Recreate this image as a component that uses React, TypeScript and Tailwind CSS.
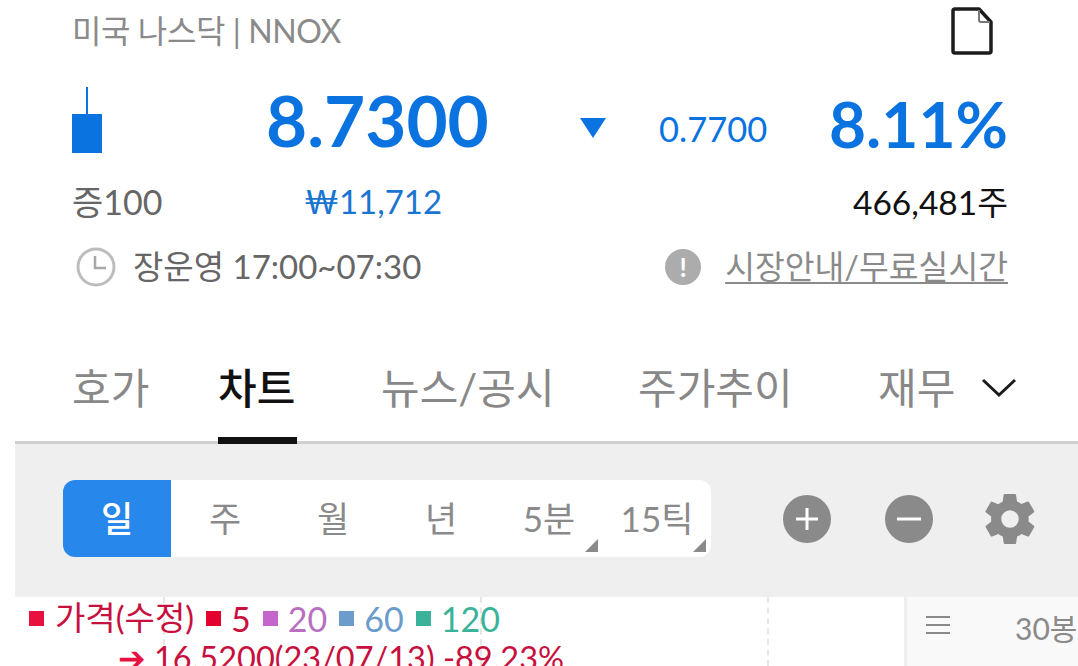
const font = "font-['Lato','Noto_Sans_CJK_KR',sans-serif]";

const periods = [
  { label: "주" },
  { label: "월" },
  { label: "년" },
  { label: "5분", menu: true },
  { label: "15틱", menu: true },
];

const legend = [
  { label: "5", box: "bg-[#e4002f]", text: "text-[#c8103e]" },
  { label: "20", box: "bg-[#c566cc]", text: "text-[#b96fc0]" },
  { label: "60", box: "bg-[#6c9ccc]", text: "text-[#6c9ccc]" },
  { label: "120", box: "bg-[#3bb39a]", text: "text-[#3bb39a]" },
];

export default function App() {
  return (
    <div className={`${font} h-[666px] w-[1078px] overflow-hidden bg-white`}>
      {/* Header */}
      <div className="pl-[72px] pr-[70px]">
        <div className="flex h-[62px] items-center justify-between">
          <span className="text-[32px] tracking-[-0.4px] text-[#8a8a8a]">미국 나스닥 | NNOX</span>
          <svg width="44" height="50" viewBox="0 0 44 50" className="mr-[14px]" fill="none">
            <path d="M3 5a2 2 0 0 1 2-2h24l12 13v29a2 2 0 0 1-2 2H5a2 2 0 0 1-2-2z" stroke="#1c1c1c" strokeWidth="3.5" strokeLinejoin="round" />
            <path d="M29 4v10a2 2 0 0 0 2 2h9" stroke="#777777" strokeWidth="2" />
          </svg>
        </div>

        <div className="flex h-[120px] items-center">
          <div className="mt-[-4px] flex w-[30px] flex-col items-center">
            <div className="h-[27px] w-[2px] bg-[#0a73e0]" />
            <div className="h-[39px] w-[30px] bg-[#0a73e0]" />
          </div>
          <span className="mt-[-6px] ml-[164px] w-[314px] text-[71px] leading-none font-bold text-[#0a73e0]">8.7300</span>
          <svg width="26" height="20" viewBox="0 0 26 20" className="mt-[12px]">
            <path d="M0 0h26L13 20z" fill="#0a73e0" />
          </svg>
          <span className="mt-[14px] ml-[53px] text-[34.5px] text-[#0a73e0]">0.7700</span>
          <span className="mt-[4px] ml-auto text-[64px] leading-none font-bold text-[#0a73e0]">8.11%</span>
        </div>

        <div className="flex h-[40px] items-center">
          <span className="mt-[-2px] w-[232px] text-[34px] text-[#666666]">증100</span>
          <span className="text-[33px] text-[#1a75d2]">₩11,712</span>
          <span className="ml-auto text-[33.5px] text-[#111111]">466,481주</span>
        </div>

        <div className="mt-[23px] flex h-[44px] items-center">
          <svg width="40" height="40" viewBox="0 0 40 40" className="ml-[4px]" fill="none">
            <circle cx="20" cy="20" r="18" stroke="#bdbdbd" strokeWidth="3" />
            <path d="M19 9v12h11" stroke="#a8a8a8" strokeWidth="2.5" />
          </svg>
          <span className="ml-[17px] text-[33px] text-[#666666]">장운영 17:00~07:30</span>
          <span className="ml-auto flex h-[36px] w-[36px] items-center justify-center rounded-full bg-[#acacac] text-[26px] leading-none font-bold text-white">!</span>
          <span className="ml-[24px] text-[32.4px] text-[#8a8a8a] underline decoration-2 underline-offset-[3px]">시장안내/무료실시간</span>
        </div>
      </div>

      {/* Tabs */}
      <div className="mt-[46px] ml-[15px] flex h-[109px] items-center border-b-[3px] border-[#d0d0d0] pl-[57px] text-[42px] text-[#888888]">
        <span className="w-[146px]">호가</span>
        <span className="relative flex h-full w-[163px] items-center font-medium text-[#111111]">
          차트
          <span className="absolute bottom-[-3px] left-0 h-[7px] w-[79px] bg-[#111111]" />
        </span>
        <span className="w-[257px]">뉴스/공시</span>
        <span className="w-[240px]">주가추이</span>
        <span>재무</span>
        <svg width="36" height="20" viewBox="0 0 36 20" className="ml-[26px]" fill="none">
          <path d="M2 2l16 15L34 2" stroke="#1c1c1c" strokeWidth="3" />
        </svg>
      </div>

      {/* Chart toolbar */}
      <div className="ml-[15px] h-[153px] bg-[#efefef] pt-[36px] pl-[48px]">
        <div className="flex items-center">
          <div className="flex h-[77px] w-[648px] overflow-hidden rounded-[12px] bg-white text-[35px] text-[#8a8a8a]">
            <div className="flex w-[108px] items-center justify-center bg-[#2787ea] font-medium text-white">일</div>
            {periods.map((p) => (
              <div key={p.label} className="relative flex w-[108px] items-center justify-center">
                {p.label}
                {p.menu && (
                  <svg width="13" height="13" viewBox="0 0 13 13" className="absolute right-[5px] bottom-[5px]">
                    <path d="M13 0v13H0z" fill="#8a8a8a" />
                  </svg>
                )}
              </div>
            ))}
          </div>
          <div className="ml-[72px] flex h-[48px] w-[48px] items-center justify-center rounded-full bg-[#8a8a8a]">
            <svg width="24" height="24" viewBox="0 0 24 24" fill="none">
              <path d="M12 1v22M1 12h22" stroke="white" strokeWidth="3" />
            </svg>
          </div>
          <div className="ml-[54px] flex h-[48px] w-[48px] items-center justify-center rounded-full bg-[#8a8a8a]">
            <svg width="24" height="24" viewBox="0 0 24 24" fill="none">
              <path d="M0 12h24" stroke="white" strokeWidth="3" />
            </svg>
          </div>
          <svg width="60" height="60" viewBox="0 0 24 24" className="ml-[47px]" fill="#8a8a8a">
            <path d="M19.4 13c.04-.32.06-.66.06-1s-.02-.68-.06-1l2.1-1.65a.5.5 0 0 0 .12-.64l-2-3.46a.5.5 0 0 0-.6-.22l-2.49 1a7.3 7.3 0 0 0-1.73-1l-.38-2.65A.5.5 0 0 0 13.94 2h-4a.5.5 0 0 0-.49.42l-.38 2.65a7.7 7.7 0 0 0-1.73 1l-2.49-1a.5.5 0 0 0-.6.22l-2 3.46a.5.5 0 0 0 .12.64L4.5 11a7.9 7.9 0 0 0 0 2l-2.1 1.65a.5.5 0 0 0-.12.64l2 3.46c.12.22.38.3.6.22l2.49-1c.52.4 1.1.74 1.73 1l.38 2.65c.04.24.25.42.49.42h4c.24 0 .45-.18.49-.42l.38-2.65a7.7 7.7 0 0 0 1.73-1l2.49 1c.22.08.48 0 .6-.22l2-3.46a.5.5 0 0 0-.12-.64zM12 15.5a3.5 3.5 0 1 1 0-7 3.5 3.5 0 0 1 0 7z" />
          </svg>
        </div>
      </div>

      {/* Chart */}
      <div className="ml-[15px] flex h-[69px]">
        <div className="relative w-[889px] overflow-hidden pl-[14px]">
          <div className="absolute top-0 left-[148px] h-full border-l-2 border-dashed border-[#e6e6e6]" />
          <div className="absolute top-0 left-[465px] h-full border-l-2 border-dashed border-[#e6e6e6]" />
          <div className="absolute top-0 left-[752px] h-full border-l-2 border-dashed border-[#e6e6e6]" />
          <div className="relative flex h-[42px] items-center text-[34px]">
            <span className="h-[15px] w-[15px] bg-[#e8103f]" />
            <span className="ml-[11px] text-[33px] text-[#c8103e]">가격(수정)</span>
            {legend.map((l) => (
              <div key={l.label} className="ml-[12px] flex items-center">
                <span className={`h-[15px] w-[15px] ${l.box}`} />
                <span className={`ml-[10px] ${l.text}`}>{l.label}</span>
              </div>
            ))}
          </div>
          <div className="relative mt-[3px] ml-[89px] flex items-center text-[32.5px] leading-none text-[#c8103e]">
            <span className="text-[#e8103f]">➔</span>
            <span className="ml-[8px] whitespace-nowrap">16.5200(23/07/13) -89.23%</span>
          </div>
        </div>
        <div className="flex flex-1 items-start border-l-[3px] border-[#efefef] bg-[#f9f9f9] pt-[9px] text-[30px] text-[#8a8a8a]">
          <div className="mt-[10px] ml-[19px] flex w-[24px] flex-col gap-[6px]">
            <span className="h-[2px] bg-[#8a8a8a]" />
            <span className="h-[2px] bg-[#8a8a8a]" />
            <span className="h-[2px] bg-[#8a8a8a]" />
          </div>
          <span className="ml-[65px] whitespace-nowrap">30봉</span>
        </div>
      </div>
    </div>
  );
}
